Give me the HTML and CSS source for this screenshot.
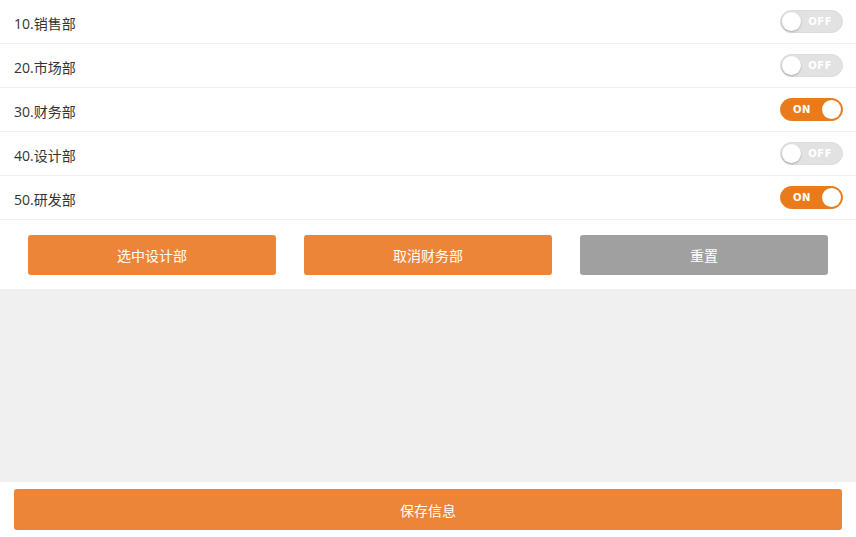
FILE: index.html
```html
<!DOCTYPE html>
<html lang="zh-CN">
<head>
    <meta charset="UTF-8">
    <title>部门设置</title>
    <link rel="stylesheet" href="styles.css">
</head>
<body>
    <ul class="dept-list">
        <li class="dept-row"><span>10.销售部</span><span class="switch"><b>OFF</b><i></i></span></li>
        <li class="dept-row"><span>20.市场部</span><span class="switch"><b>OFF</b><i></i></span></li>
        <li class="dept-row"><span>30.财务部</span><span class="switch on"><b>ON</b><i></i></span></li>
        <li class="dept-row"><span>40.设计部</span><span class="switch"><b>OFF</b><i></i></span></li>
        <li class="dept-row"><span>50.研发部</span><span class="switch on"><b>ON</b><i></i></span></li>
    </ul>
    <div class="actions">
        <button class="btn">选中设计部</button>
        <button class="btn">取消财务部</button>
        <button class="btn gray">重置</button>
    </div>
    <div class="blank"></div>
    <div class="footer">
        <button class="btn save">保存信息</button>
    </div>
</body>
</html>
```

FILE: styles.css
```css
*{
    box-sizing: border-box;
    margin: 0;
    padding: 0;
}
body{
    font-family: "Open Sans", "Noto Sans CJK SC", sans-serif;
    background: #fff;
    color: #333;
    width: 856px;
    height: 537px;
    display: flex;
    flex-direction: column;
}
/* list of departments */
.dept-list{
    list-style: none;
}
.dept-row{
    height: 44px;
    display: flex;
    justify-content: space-between;
    align-items: center;
    padding: 0 13px 0 14px;
    border-bottom: 1px solid #f0f0f0;
    font-size: 14px;
}
.dept-row span:first-child{
    margin-top: 2px;
}
.switch{
    position: relative;
    width: 63px;
    height: 23px;
    border-radius: 12px;
    background: #e2e2e2;
    border: 1px solid #dcdcdc;
    display: flex;
    align-items: center;
    justify-content: flex-end;
    padding-right: 10px;
}
.switch b{
    font-family: "DejaVu Sans", sans-serif;
    font-size: 10px;
    font-weight: bold;
    color: #fff;
    letter-spacing: 0.5px;
}
.switch i{
    position: absolute;
    left: 1px;
    top: 1px;
    width: 19px;
    height: 19px;
    border-radius: 50%;
    background: #fff;
    box-shadow: 0 1px 2px rgba(0,0,0,0.25);
}
.switch.on{
    background: #e97b1c;
    border-color: #e97b1c;
    justify-content: flex-start;
    padding-left: 12px;
}
.switch.on i{
    left: auto;
    right: 1px;
    box-shadow: none;
}
/* buttons */
.actions{
    display: grid;
    grid-template-columns: repeat(3, 1fr);
    column-gap: 28px;
    padding: 15px 28px 14px 28px;
}
.btn{
    height: 40px;
    border: none;
    border-radius: 3px;
    background: #ed8539;
    color: #fff;
    font-family: "Open Sans", "Noto Sans CJK SC", sans-serif;
    font-size: 14px;
}
.btn.gray{
    background: #a0a0a0;
}
.blank{
    flex: 1;
    background: #f0f0f0;
}
.footer{
    padding: 7px 14px 7px 14px;
}
.btn.save{
    width: 100%;
    height: 41px;
}
```
